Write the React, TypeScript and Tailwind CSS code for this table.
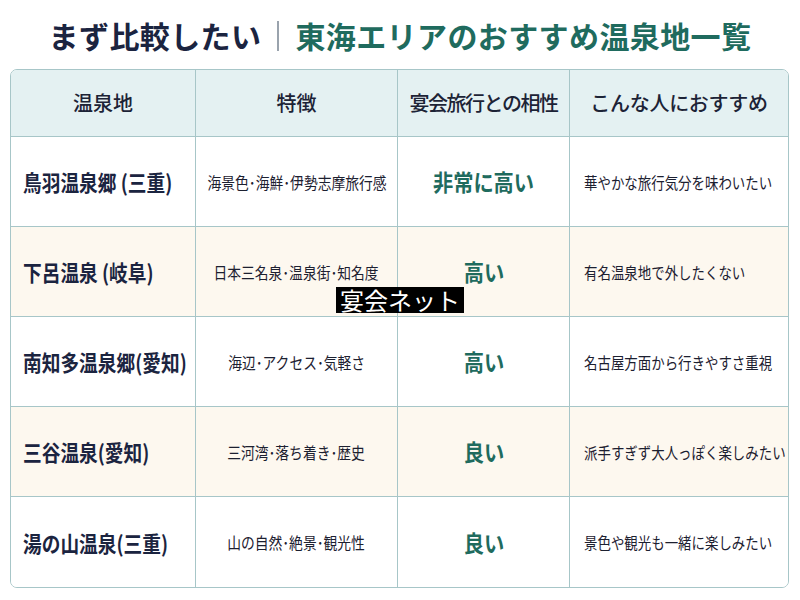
const ROWS = [
  { name: "鳥羽温泉郷 (三重)", feature: "海景色･海鮮･伊勢志摩旅行感", fit: "非常に高い", who: "華やかな旅行気分を味わいたい" },
  { name: "下呂温泉 (岐阜)", feature: "日本三名泉･温泉街･知名度", fit: "高い", who: "有名温泉地で外したくない" },
  { name: "南知多温泉郷(愛知)", feature: "海辺･アクセス･気軽さ", fit: "高い", who: "名古屋方面から行きやすさ重視" },
  { name: "三谷温泉(愛知)", feature: "三河湾･落ち着き･歴史", fit: "良い", who: "派手すぎず大人っぽく楽しみたい" },
  { name: "湯の山温泉(三重)", feature: "山の自然･絶景･観光性", fit: "良い", who: "景色や観光も一緒に楽しみたい" },
];

const HEAD = ["温泉地", "特徴", "宴会旅行との相性", "こんな人におすすめ"];
const HEAD_CLS = ["tracking-[0px]", "tracking-[0px]", "tracking-[-1.5px]", "tracking-[-0.3px]"];

const cols = "grid grid-cols-[185px_202px_172px_218px]";

export default function App() {
  return (
    <div
      className="relative w-[800px] h-[600px] bg-white overflow-hidden"
      style={{ fontFamily: '"Noto Sans CJK JP", "Noto Sans", sans-serif' }}
    >
      <h1 className="h-[69px] flex items-center justify-center pt-[2px] text-[30px] font-bold tracking-[0.4px]">
        <span className="text-[#1b2440]">まず比較したい</span>
        <span className="mx-[16px] w-[2px] h-[30px] bg-[#9aa3ad]" />
        <span className="text-[#1f6b5e]">東海エリアのおすすめ温泉地一覧</span>
      </h1>

      <div className="mx-[10px] w-[779px] border border-[#a7c6c8] rounded-[7px] overflow-hidden">
        <div className={`${cols} h-[67px] bg-[#e4f1f2] border-b border-[#a7c6c8]`}>
          {HEAD.map((h, i) => (
            <div
              key={h}
              className={`flex items-center justify-center text-[20px] font-medium text-[#1c2336] ${HEAD_CLS[i]} ${i < 3 ? "border-r border-[#a7c6c8]" : ""}`}
            >
              {h}
            </div>
          ))}
        </div>
        {ROWS.map((r, k) => (
          <div
            key={r.name}
            className={`${cols} h-[90px] ${k % 2 === 1 ? "bg-[#fdf8ef]" : "bg-white"} ${k < ROWS.length - 1 ? "border-b border-[#a7c6c8]" : ""}`}
          >
            <div className="flex items-center pl-[12px] border-r border-[#a7c6c8] whitespace-nowrap">
              <span className="inline-block origin-left scale-x-[0.85] text-[22px] font-bold text-[#1b2440]">{r.name}</span>
            </div>
            <div className="flex items-center justify-center border-r border-[#a7c6c8] whitespace-nowrap">
              <span className="inline-block scale-x-[0.86] text-[16px] text-[#1c2030]">{r.feature}</span>
            </div>
            <div className="flex items-center justify-center border-r border-[#a7c6c8] whitespace-nowrap">
              <span className="inline-block scale-x-[0.88] text-[23px] font-bold text-[#1f6b5e]">{r.fit}</span>
            </div>
            <div className="flex items-center pl-[14px] whitespace-nowrap">
              <span className="inline-block origin-left scale-x-[0.84] text-[16px] text-[#1c2030]">{r.who}</span>
            </div>
          </div>
        ))}
      </div>

      <div className="absolute left-[336px] top-[287px] h-[26px] px-[4px] bg-black text-white text-[24px] leading-[26px]">
        宴会ネット
      </div>
    </div>
  );
}
